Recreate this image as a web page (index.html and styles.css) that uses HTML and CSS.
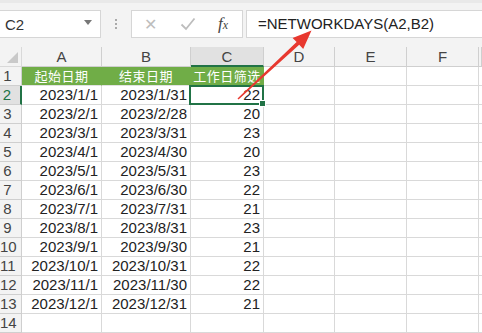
FILE: index.html
```html
<!DOCTYPE html>
<html lang="zh-CN">
<head>
  <meta charset="UTF-8">
  <title>工作日筛选</title>
  <link rel="stylesheet" href="styles.css">
</head>
<body>
  <div class="app">
    <div class="formula-bar">
      <div class="name-box">
        <span>C2</span>
        <span class="caret"></span>
      </div>
      <div class="grip"><i></i><i></i><i></i></div>
      <div class="buttons">
        <span class="btn">&#x2715;</span>
        <svg class="btn-check" width="16" height="14" viewBox="0 0 16 14"><path d="M1.5 7.5 L6 12 L14.5 1.5" fill="none" stroke="#bdbdbd" stroke-width="1.8"/></svg>
        <span class="fx">f<sub>x</sub></span>
      </div>
      <div class="formula">=NETWORKDAYS(A2,B2)</div>
    </div>

    <div class="sheet">
      <div class="corner"><span class="tri"></span></div>
      <div class="col-head">A</div>
      <div class="col-head">B</div>
      <div class="col-head active">C</div>
      <div class="col-head">D</div>
      <div class="col-head">E</div>
      <div class="col-head">F</div>
      <div class="col-head"></div>

      <div class="row-head">1</div>
      <div class="cell title">起始日期</div>
      <div class="cell title">结束日期</div>
      <div class="cell title">工作日筛选</div>
      <div class="cell"></div>
      <div class="cell"></div>
      <div class="cell"></div>
      <div class="cell"></div>

      <div class="row-head active">2</div>
      <div class="cell">2023/1/1</div>
      <div class="cell">2023/1/31</div>
      <div class="cell selected">22</div>
      <div class="cell"></div><div class="cell"></div><div class="cell"></div><div class="cell"></div>

      <div class="row-head">3</div>
      <div class="cell">2023/2/1</div>
      <div class="cell">2023/2/28</div>
      <div class="cell">20</div>
      <div class="cell"></div><div class="cell"></div><div class="cell"></div><div class="cell"></div>

      <div class="row-head">4</div>
      <div class="cell">2023/3/1</div>
      <div class="cell">2023/3/31</div>
      <div class="cell">23</div>
      <div class="cell"></div><div class="cell"></div><div class="cell"></div><div class="cell"></div>

      <div class="row-head">5</div>
      <div class="cell">2023/4/1</div>
      <div class="cell">2023/4/30</div>
      <div class="cell">20</div>
      <div class="cell"></div><div class="cell"></div><div class="cell"></div><div class="cell"></div>

      <div class="row-head">6</div>
      <div class="cell">2023/5/1</div>
      <div class="cell">2023/5/31</div>
      <div class="cell">23</div>
      <div class="cell"></div><div class="cell"></div><div class="cell"></div><div class="cell"></div>

      <div class="row-head">7</div>
      <div class="cell">2023/6/1</div>
      <div class="cell">2023/6/30</div>
      <div class="cell">22</div>
      <div class="cell"></div><div class="cell"></div><div class="cell"></div><div class="cell"></div>

      <div class="row-head">8</div>
      <div class="cell">2023/7/1</div>
      <div class="cell">2023/7/31</div>
      <div class="cell">21</div>
      <div class="cell"></div><div class="cell"></div><div class="cell"></div><div class="cell"></div>

      <div class="row-head">9</div>
      <div class="cell">2023/8/1</div>
      <div class="cell">2023/8/31</div>
      <div class="cell">23</div>
      <div class="cell"></div><div class="cell"></div><div class="cell"></div><div class="cell"></div>

      <div class="row-head">10</div>
      <div class="cell">2023/9/1</div>
      <div class="cell">2023/9/30</div>
      <div class="cell">21</div>
      <div class="cell"></div><div class="cell"></div><div class="cell"></div><div class="cell"></div>

      <div class="row-head">11</div>
      <div class="cell">2023/10/1</div>
      <div class="cell">2023/10/31</div>
      <div class="cell">22</div>
      <div class="cell"></div><div class="cell"></div><div class="cell"></div><div class="cell"></div>

      <div class="row-head">12</div>
      <div class="cell">2023/11/1</div>
      <div class="cell">2023/11/30</div>
      <div class="cell">22</div>
      <div class="cell"></div><div class="cell"></div><div class="cell"></div><div class="cell"></div>

      <div class="row-head">13</div>
      <div class="cell">2023/12/1</div>
      <div class="cell">2023/12/31</div>
      <div class="cell">21</div>
      <div class="cell"></div><div class="cell"></div><div class="cell"></div><div class="cell"></div>

      <div class="row-head">14</div>
      <div class="cell"></div><div class="cell"></div><div class="cell"></div>
      <div class="cell"></div><div class="cell"></div><div class="cell"></div><div class="cell"></div>
    </div>

    <!-- red annotation arrow pointing at the formula -->
    <svg class="arrow" width="482" height="333" viewBox="0 0 482 333">
      <polygon fill="#e8382f" points="237.5,98.4 296.6,42.0 292.6,38.0 311.5,30.5 303.2,48.9 299.2,44.8 238.5,99.6"/>
    </svg>
  </div>
</body>
</html>
```

FILE: styles.css
```css
* {
  box-sizing: border-box;
}
body {
  margin: 0;
  background: #fff;
  font-family: "Liberation Sans", Arial, "Noto Sans CJK SC", sans-serif;
  color: #222;
}
.app {
  position: relative;
  width: 482px;
  height: 333px;
  overflow: hidden;
}

/* formula bar */
.formula-bar {
  height: 47px;
  background: #f3f3f3;
  border-top: 3px solid #e9e9e9;
  display: flex;
  align-items: flex-start;
  padding-top: 7px;
}
.name-box {
  width: 101px;
  height: 28px;
  background: #fff;
  border: 1px solid #d6d6d6;
  border-left: none;
  display: flex;
  align-items: center;
  justify-content: space-between;
  padding: 0 8px 0 5px;
  font-size: 15px;
  color: #333;
}
.caret {
  width: 0;
  height: 0;
  border-left: 4px solid transparent;
  border-right: 4px solid transparent;
  border-top: 5px solid #777;
  margin-top: -3px;
}
.grip {
  width: 30px;
  height: 28px;
  display: flex;
  flex-direction: column;
  align-items: center;
  justify-content: center;
  gap: 2px;
}
.grip i {
  width: 2px;
  height: 2px;
  background: #aaa;
}
.buttons {
  width: 112px;
  height: 28px;
  background: #fff;
  border: 1px solid #d6d6d6;
  display: flex;
  align-items: center;
  padding-left: 12px;
  gap: 20px;
}
.btn {
  font-size: 16px;
  color: #bdbdbd;
  width: 16px;
}
.fx {
  font-family: "Liberation Serif", serif;
  font-style: italic;
  font-size: 17px;
  color: #444;
  margin-left: 2px;
}
.fx sub {
  font-size: 12px;
  vertical-align: 0;
}
.formula {
  flex: 1;
  height: 28px;
  margin-left: 3px;
  background: #fff;
  border: 1px solid #d6d6d6;
  border-right: none;
  padding-left: 11px;
  font-size: 15px;
  line-height: 26px;
  color: #222;
}

/* sheet grid */
.sheet {
  display: grid;
  grid-template-columns: 22px 80px 89px 73px 71px 72px 72px 3px;
  grid-template-rows: 20px;
  grid-auto-rows: 19px;
}
.sheet > div {
  border-right: 1px solid #d9d9d9;
  border-bottom: 1px solid #d9d9d9;
  font-size: 15px;
  line-height: 18px;
  white-space: nowrap;
  overflow: hidden;
}
.corner {
  background: #f3f3f3;
  position: relative;
}
.tri {
  position: absolute;
  right: 3px;
  bottom: 3px;
  width: 0;
  height: 0;
  border-left: 11px solid transparent;
  border-bottom: 11px solid #c9c9c9;
}
.sheet > .col-head {
  background: #f3f3f3;
  border-color: #cfcfcf;
  text-align: center;
  color: #444;
  line-height: 20px;
}
.sheet > .col-head.active {
  background: #e1e1e1;
  border-bottom: 2px solid #217346;
}
.sheet > .row-head {
  background: #f3f3f3;
  border-color: #cfcfcf;
  color: #444;
  padding-right: 6px;
  text-align: center;
}
.sheet > .row-head.active {
  background: #e1e1e1;
  border-right: 2px solid #217346;
  color: #217346;
}
.cell {
  text-align: right;
  padding-right: 3px;
  background: #fff;
}
.sheet > .title {
  background: #70ad47;
  border-right-color: #70ad47;
  border-bottom-color: #e2e2e2;
  color: #fff;
  text-align: center;
  padding-right: 0;
  font-family: "Noto Sans CJK SC", sans-serif;
  font-size: 13px;
  letter-spacing: 0.5px;
}
.sheet > .selected {
  position: relative;
  overflow: visible;
}
.selected::after {
  content: "";
  position: absolute;
  left: -2px;
  top: -1px;
  right: -1px;
  bottom: -1px;
  border: 2px solid #217346;
}
.selected::before {
  content: "";
  position: absolute;
  right: -3px;
  bottom: -3px;
  width: 5px;
  height: 5px;
  background: #217346;
  border: 1px solid #fff;
  z-index: 1;
}

.arrow {
  position: absolute;
  left: 0;
  top: 0;
  pointer-events: none;
}
```
